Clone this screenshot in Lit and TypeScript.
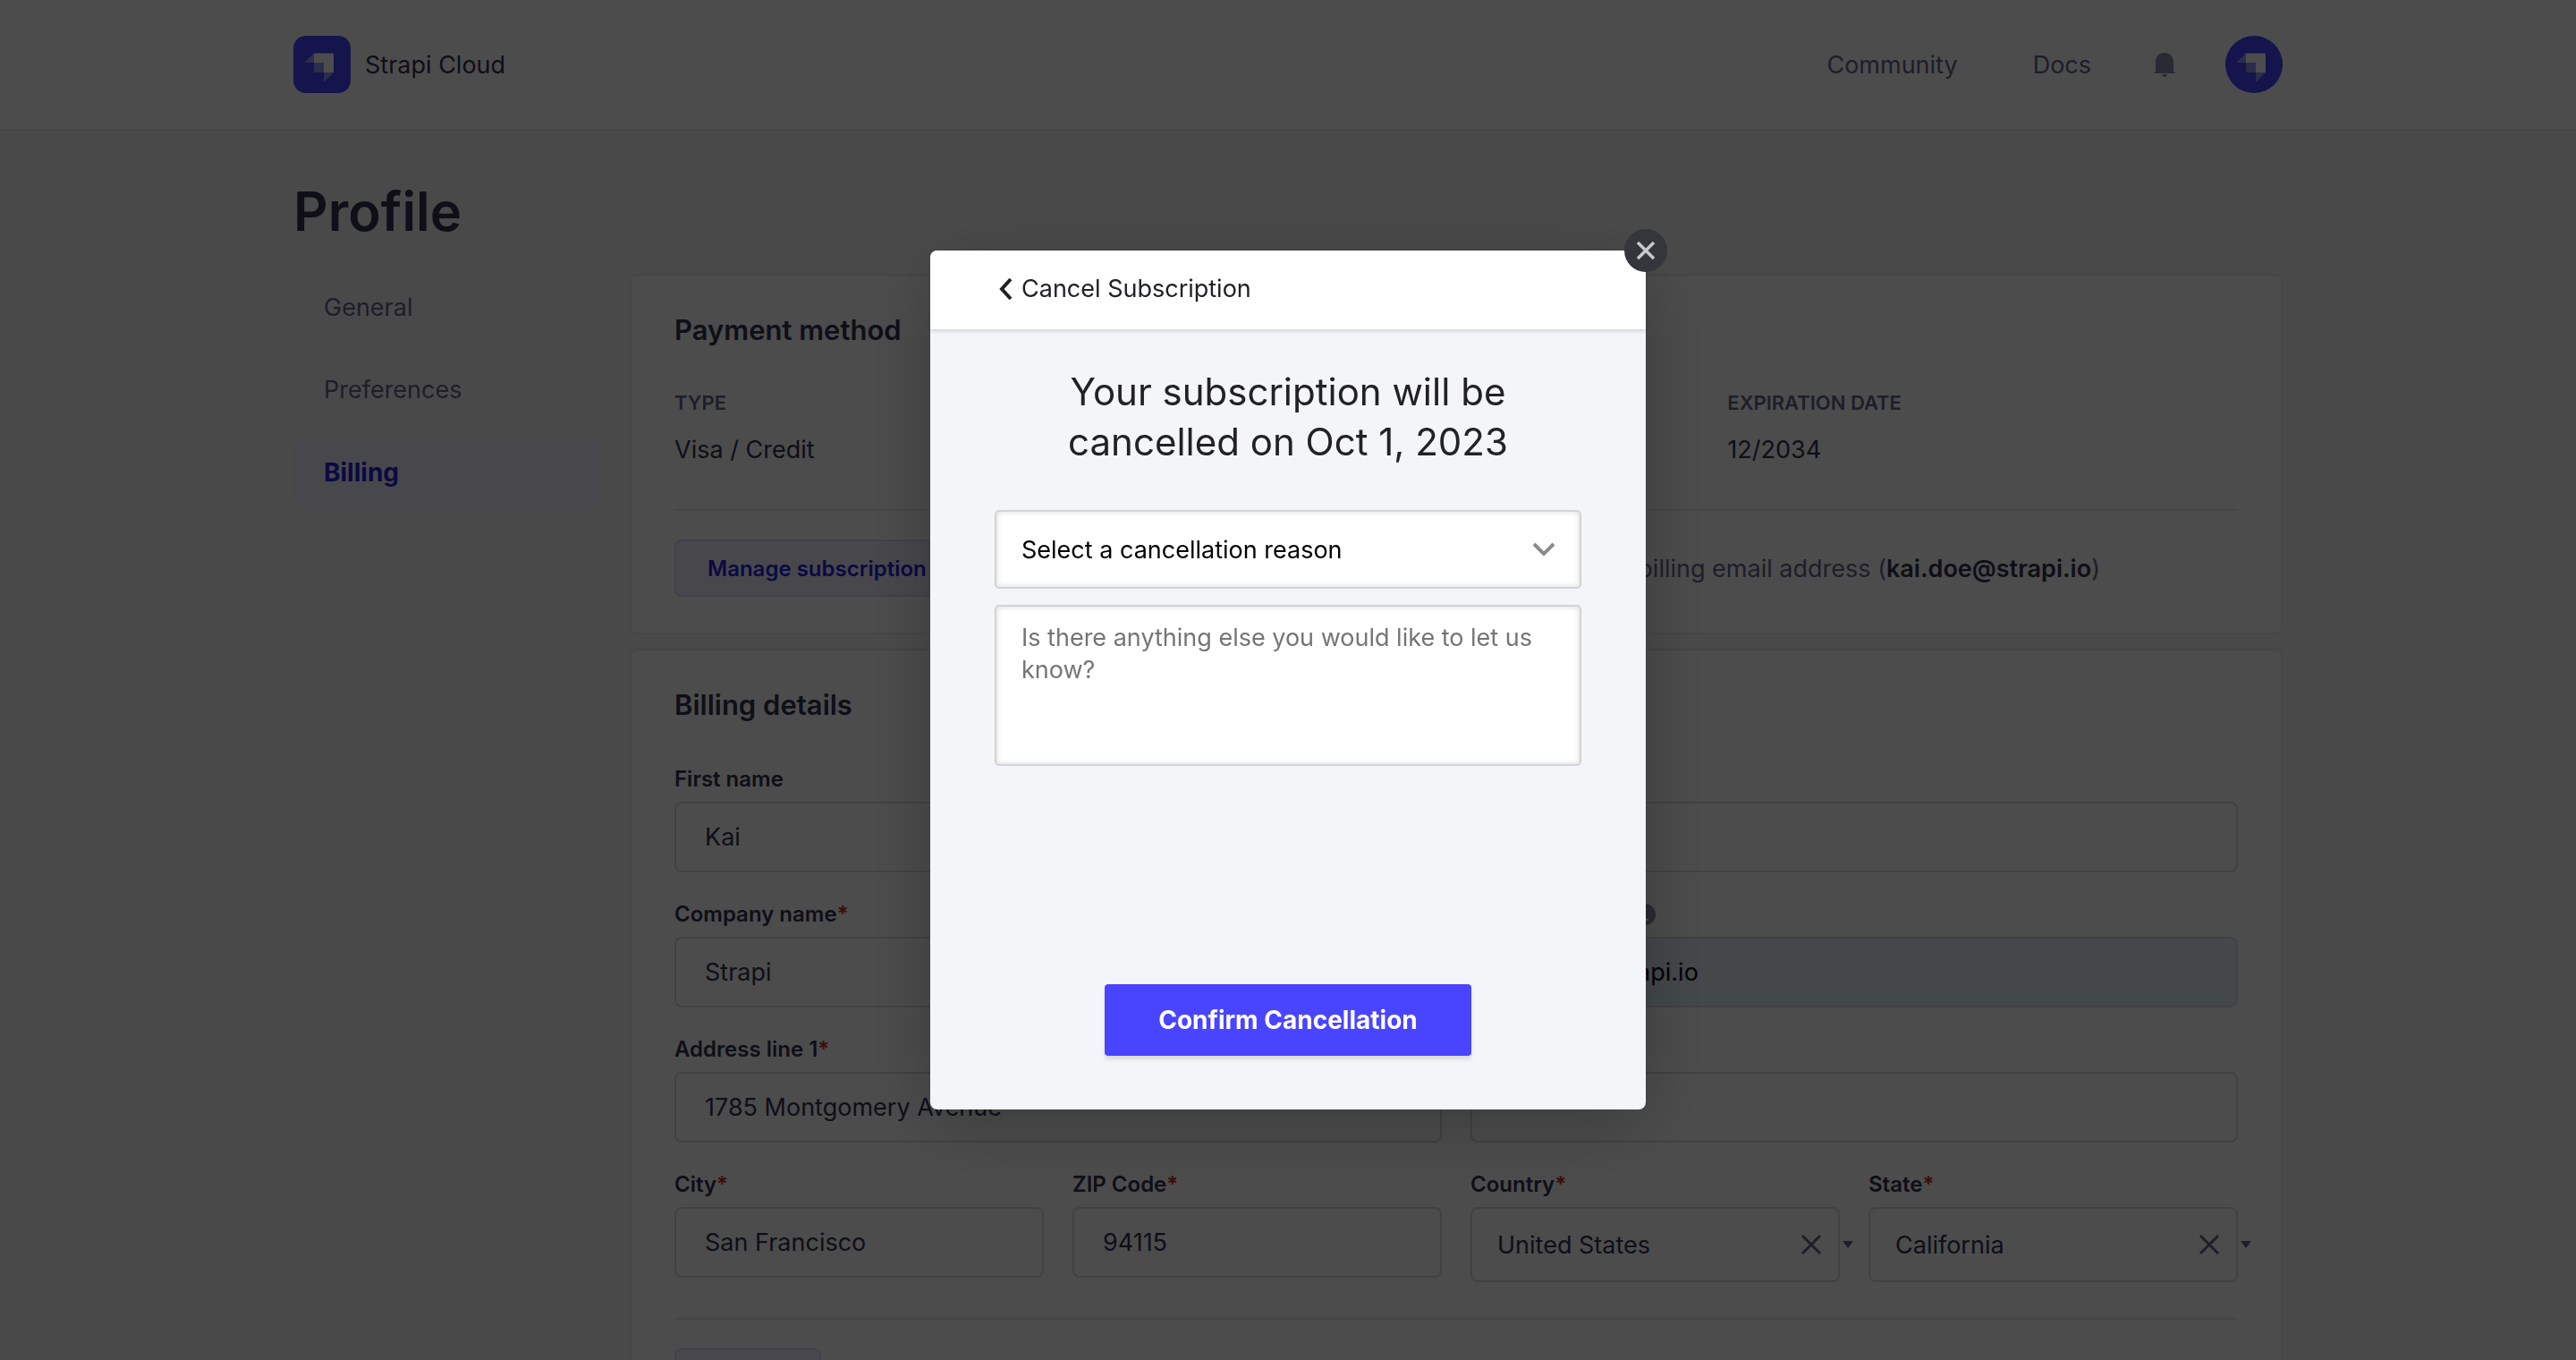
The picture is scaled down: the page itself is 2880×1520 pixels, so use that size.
import { LitElement, html, css, svg, nothing } from "lit";
import { customElement, property } from "lit/decorators.js";

const mark = svg`
  <path d="M23 19.500h21q1 0 1 1V41H34V30H23z" fill="#fff"/>
  <path d="M23 30h11v11H24q-1 0-1-1z" fill="#9593ff"/>
  <path d="M34 41h11L34.600 51.400q-.6.6-.6-.4z" fill="#9593ff"/>
  <path d="M23 19.500V30H13q-1 0-.4-.6z" fill="#9593ff"/>
`;

@customElement("strapi-mark")
class StrapiMark extends LitElement {
  @property({ type: Boolean }) round = false;
  static styles = css`
    :host { display: block; flex: none; width: 64px; height: 64px; }
    svg { display: block; width: 100%; height: 100%; }
  `;
  render() {
    return html`<svg viewBox="0 0 64 64" aria-hidden="true">
      <rect width="64" height="64" rx=${this.round ? 32 : 14} fill="#4945ff"/>
      ${mark}
    </svg>`;
  }
}

interface Field {
  id: string;
  label: string;
  value?: string;
  required?: boolean;
  kind?: "text" | "select" | "email";
  half?: boolean;
}

const FIELDS: Field[] = [
  { id: "first", label: "First name", value: "Kai" },
  { id: "last", label: "Last name" },
  { id: "company", label: "Company name", value: "Strapi", required: true },
  { id: "email", label: "Email address", value: "kai.doe@strapi.io", required: true, kind: "email" },
  { id: "addr1", label: "Address line 1", value: "1785 Montgomery Avenue", required: true },
  { id: "addr2", label: "Address line 2" },
  { id: "city", label: "City", value: "San Francisco", required: true, half: true },
  { id: "zip", label: "ZIP Code", value: "94115", required: true, half: true },
  { id: "country", label: "Country", value: "United States", required: true, kind: "select", half: true },
  { id: "state", label: "State", value: "California", required: true, kind: "select", half: true },
];

@customElement("profile-page")
class ProfilePage extends LitElement {
  static styles = css`
    :host { display: block; color: #32324d; }
    * { box-sizing: border-box; }
    h1, h2, p, dl, dd { margin: 0; }
    a { color: inherit; text-decoration: none; }
    button, input, select { font: inherit; color: inherit; }
    .wrap { max-width: 2224px; margin: 0 auto; }
    .top { background: #fff; border-bottom: 2px solid #eaeaef; }
    .bar { display: flex; align-items: center; height: 144px; }
    .brand { display: flex; align-items: center; gap: 16px; }
    .links { display: flex; align-items: center; margin-left: auto; color: #666687; }
    .links a + a { margin-left: 84px; }
    .bell { display: flex; padding: 0; margin: 0 56px 0 70px; border: 0; background: none; }
    .bell svg { width: 24px; height: 28px; }
    .page { padding-top: 50px; }
    h1 { font-size: 60px; line-height: 80px; font-weight: 600; margin-bottom: 30px; }
    .cols { display: grid; grid-template-columns: 344px minmax(0, 1fr); gap: 32px; align-items: start; }
    .side { display: grid; gap: 16px; color: #666687; }
    .side a { display: block; padding: 0 34px; line-height: 76px; border-radius: 8px; }
    .side .on { background: #f0f0ff; color: #271fe0; font-size: 28px; font-weight: 700; }
    .stack { display: grid; gap: 16px; }
    .card { background: #fff; border: 2px solid #eaeaef; border-radius: 8px; padding: 41px 48px 40px; }
    h2 { font-size: 31px; line-height: 40px; font-weight: 600; margin-bottom: 47px; }
    .facts { display: grid; grid-template-columns: repeat(3, 1fr); gap: 18px; margin-bottom: 47px; }
    .fact:last-child { grid-column: 3; }
    .fact dt { font-size: 22px; line-height: 28px; font-weight: 600; text-transform: uppercase; color: #666687; margin-bottom: 20px; }
    .fact dd { line-height: 38px; }
    .rule { height: 2px; background: #eaeaef; margin-bottom: 32px; }
    .row { display: flex; align-items: center; justify-content: space-between; padding-right: 154px; }
    .soft { min-width: 164px; height: 64px; padding: 0 35px; border: 2px solid #d9d8ff; border-radius: 8px; background: #f0f0ff; color: #271fe0; font-size: 24px; font-weight: 600; }
    .note { color: #666687; }
    .note strong { color: #32324d; font-weight: 600; }
    .form { display: grid; grid-template-columns: repeat(4, minmax(0, 1fr)); gap: 31px 32px; margin-bottom: 40px; align-items: start; }
    .field { grid-column: span 2; display: grid; gap: 9px; }
    .field.half { grid-column: span 1; }
    .cap { display: flex; align-items: center; gap: 8px; font-size: 24px; line-height: 32px; font-weight: 600; }
    .req { color: #d02b20; }
    .info { flex: none; width: 24px; height: 24px; }
    .box { display: block; width: 100%; height: 79px; padding: 0 32px; border: 2px solid #dcdce4; border-radius: 8px; background: #fff; }
    .auto { background: #e3f0fa; color: #000; }
    .pick { position: relative; }
    .pick .box { height: 84px; padding: 0 28px; appearance: none; }
    .clear { position: absolute; right: 20px; top: 30px; display: flex; padding: 0; border: 0; background: none; }
    .clear svg { width: 24px; height: 24px; }
    .caret { position: absolute; left: 100%; top: 38px; margin-left: 3px; width: 12px; height: 8px; }
  `;

  control(f: Field) {
    if (f.kind === "select") {
      return html`<div class="pick">
        <select class="box" id=${f.id}><option>${f.value}</option></select>
        <button class="clear" type="button" aria-label="Clear ${f.label}">
          <svg viewBox="0 0 24 24"><path d="M2 2l20 20M22 2L2 22" stroke="#666687" stroke-width="3"/></svg>
        </button>
        <svg class="caret" viewBox="0 0 12 8" aria-hidden="true"><path d="M0 0h12L6 8z" fill="#666687"/></svg>
      </div>`;
    }
    return html`<input class="box ${f.kind === "email" ? "auto" : ""}" id=${f.id}
      type=${f.kind ?? "text"} .value=${f.value ?? ""}>`;
  }

  field(f: Field) {
    return html`<div class="field ${f.half ? "half" : ""}">
      <div class="cap">
        <label for=${f.id}>${f.label}${f.required ? html`<span class="req">*</span>` : nothing}</label>
        ${f.kind === "email"
          ? html`<svg class="info" viewBox="0 0 24 24" aria-hidden="true">
              <circle cx="12" cy="12" r="12" fill="#8e8ea9"/>
              <path d="M9 10h4v7h3v2H9v-2h2v-5H9zM10.500 5.500h3V8h-3z" fill="#fff"/>
            </svg>`
          : nothing}
      </div>
      ${this.control(f)}
    </div>`;
  }

  render() {
    return html`
      <header class="top">
        <div class="wrap bar">
          <a class="brand" href="#"><strapi-mark></strapi-mark>Strapi Cloud</a>
          <nav class="links">
            <a href="#community">Community</a>
            <a href="#docs">Docs</a>
            <button class="bell" type="button" aria-label="Notifications">
              <svg viewBox="0 0 24 28"><path d="M2 22V11.500C2 5 6 1 12 1s10 4 10 10.500V22h1.500v2H.5v-2zM9 25h6c0 4-6 4-6 0z" fill="#8e8ea9"/></svg>
            </button>
            <a href="#account" aria-label="Account"><strapi-mark round></strapi-mark></a>
          </nav>
        </div>
      </header>
      <main class="wrap page">
        <h1>Profile</h1>
        <div class="cols">
          <nav class="side">
            <a href="#general">General</a>
            <a href="#preferences">Preferences</a>
            <a class="on" href="#billing">Billing</a>
          </nav>
          <div class="stack">
            <section class="card">
              <h2>Payment method</h2>
              <dl class="facts">
                <div class="fact"><dt>Type</dt><dd>Visa / Credit</dd></div>
                <div class="fact"><dt>Expiration date</dt><dd>12/2034</dd></div>
              </dl>
              <div class="rule"></div>
              <div class="row">
                <button class="soft" type="button">Manage subscription</button>
                <p class="note">billing email address (<strong>kai.doe@strapi.io</strong>)</p>
              </div>
            </section>
            <section class="card">
              <h2>Billing details</h2>
              <div class="form">${FIELDS.map((f) => this.field(f))}</div>
              <div class="rule"></div>
              <button class="soft" type="button" aria-label="Update"></button>
            </section>
          </div>
        </div>
      </main>
    `;
  }
}

@customElement("cancel-dialog")
class CancelDialog extends LitElement {
  static styles = css`
    :host { position: fixed; inset: 0; display: flex; align-items: center; justify-content: center; background: rgba(0, 0, 0, 0.7); color: #212126; }
    * { box-sizing: border-box; }
    button, select, textarea { font: inherit; }
    .dialog { position: relative; display: flex; flex-direction: column; width: min(800px, 100%); min-height: 960px; border-radius: 8px; background: #f3f5f9; box-shadow: 0 16px 80px rgba(0, 0, 0, 0.24); }
    .head { padding: 25px 72px 27px; background: #fff; border-radius: 8px 8px 0 0; box-shadow: 0 2px 4px rgba(33, 33, 52, 0.16); }
    .back { display: flex; align-items: center; gap: 10px; padding: 0 4px; border: 0; background: none; color: inherit; line-height: 36px; }
    .back svg { width: 16px; height: 26px; }
    .body { flex: 1; display: flex; flex-direction: column; padding: 42px 72px 60px; }
    h2 { margin: 0 0 48px; font-size: 42px; line-height: 56px; font-weight: 400; text-align: center; }
    .in { display: block; width: 100%; border: 2px solid #d2d3d6; border-radius: 5px; background: #fff; box-shadow: inset 0 0 6px rgba(0, 0, 0, 0.16); }
    .pick { position: relative; margin-bottom: 18px; }
    .pick .in { height: 88px; padding: 0 28px; appearance: none; color: #000; }
    .pick svg { position: absolute; right: 29px; top: 36px; width: 26px; height: 16px; pointer-events: none; }
    textarea.in { height: 180px; padding: 17px 28px; line-height: 36px; resize: none; }
    textarea::placeholder { color: #757575; }
    .ok { align-self: center; margin-top: auto; height: 80px; padding: 0 60px; border: 0; border-radius: 4px; background: #4945ff; color: #fff; font-size: 28px; font-weight: 700; box-shadow: 0 4px 4px rgba(0, 0, 0, 0.1); }
    .close { position: absolute; top: -24px; right: -24px; width: 48px; height: 48px; padding: 0; border: 0; border-radius: 50%; background: #35363c; }
    .close svg { display: block; width: 48px; height: 48px; }
  `;
  render() {
    return html`<div class="dialog" role="dialog" aria-modal="true" aria-labelledby="title">
      <div class="head">
        <button class="back" type="button">
          <svg viewBox="0 0 16 26" aria-hidden="true"><path d="M14 2L4 13l10 11" fill="none" stroke="#212126" stroke-width="4"/></svg>
          Cancel Subscription
        </button>
      </div>
      <div class="body">
        <h2 id="title">Your subscription will be<br>cancelled on Oct 1, 2023</h2>
        <div class="pick">
          <select class="in" aria-label="Cancellation reason"><option>Select a cancellation reason</option></select>
          <svg viewBox="0 0 26 16" aria-hidden="true"><path d="M2 2l11 11L24 2" fill="none" stroke="#8b8b8d" stroke-width="4"/></svg>
        </div>
        <textarea class="in" aria-label="Comments" placeholder="Is there anything else you would like to let us know?"></textarea>
        <button class="ok" type="button">Confirm Cancellation</button>
      </div>
      <button class="close" type="button" aria-label="Close">
        <svg viewBox="0 0 48 48"><path d="M15 15l18 18M33 15L15 33" stroke="#c9c9cc" stroke-width="3.500"/></svg>
      </button>
    </div>`;
  }
}

@customElement("app-root")
class AppRoot extends LitElement {
  static styles = css`
    :host { display: block; height: 100vh; overflow: hidden; background: #f6f6f9; font: 400 27px "Inter", "Liberation Sans", sans-serif; }
  `;
  render() {
    return html`<profile-page></profile-page><cancel-dialog></cancel-dialog>`;
  }
}
